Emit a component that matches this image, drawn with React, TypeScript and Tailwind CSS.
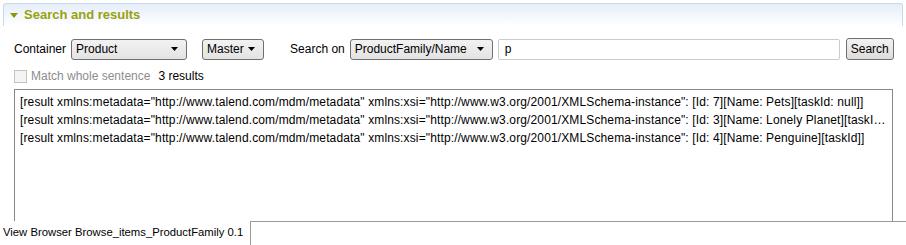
import { useState } from "react";

const rows = [
  '[result xmlns:metadata="http://www.talend.com/mdm/metadata" xmlns:xsi="http://www.w3.org/2001/XMLSchema-instance": [Id: 7][Name: Pets][taskId: null]]',
  '[result xmlns:metadata="http://www.talend.com/mdm/metadata" xmlns:xsi="http://www.w3.org/2001/XMLSchema-instance": [Id: 3][Name: Lonely Planet][taskId: null]]',
  '[result xmlns:metadata="http://www.talend.com/mdm/metadata" xmlns:xsi="http://www.w3.org/2001/XMLSchema-instance": [Id: 4][Name: Penguine][taskId]]',
];

function Combo({ label, width }: { label: string; width: string }) {
  return (
    <div
      className={`flex items-center justify-between h-[21px] ${width} border border-[#707070] rounded-[3px] bg-gradient-to-b from-[#f2f2f2] to-[#e3e3e3] pl-[4px] pr-[8px]`}
    >
      <span>{label}</span>
      <svg width="7" height="4" viewBox="0 0 7 4">
        <path d="M0 0h7L3.5 4z" fill="#000" />
      </svg>
    </div>
  );
}

export default function App() {
  const [query, setQuery] = useState("p");

  return (
    <div className="w-[906px] h-[245px] bg-white text-[12px] text-black font-['Liberation_Sans',sans-serif] overflow-hidden flex flex-col">
      <div className="mx-[3px] mt-[3px] h-[23px] rounded-t-[3px] border border-b-0 border-[#c5daf2] bg-gradient-to-b from-[#e6eefa] to-white flex items-center pl-[6px] gap-[6px]">
        <svg width="8" height="5" viewBox="0 0 8 5">
          <path d="M0 0h8L4 5z" fill="#8a9a0a" />
        </svg>
        <span className="text-[#98a20c] font-bold text-[13px]">Search and results</span>
      </div>

      <div className="flex items-center mt-[12px] pl-[14px] h-[22px]">
        <span className="mr-[5px]">Container</span>
        <Combo label="Product" width="w-[116px]" />
        <div className="w-[15px]" />
        <Combo label="Master" width="w-[62px]" />
        <span className="ml-[26px] mr-[5px]">Search on</span>
        <Combo label="ProductFamily/Name" width="w-[143px]" />
        <input
          value={query}
          onChange={(e) => setQuery(e.target.value)}
          className="ml-[5px] w-[342px] h-[21px] border border-[#c8ccd2] rounded-[2px] px-[6px] outline-none"
        />
        <button className="ml-[6px] h-[22px] px-[4px] border border-[#707070] rounded-[3px] bg-gradient-to-b from-[#f2f2f2] to-[#dcdcdc]">
          Search
        </button>
      </div>

      <div className="flex items-center pl-[14px] mt-[6px] h-[20px]">
        <span className="w-[13px] h-[13px] border border-[#c3c3c3] bg-[#f4f4f4] mr-[4px]" />
        <span className="text-[#8d8d8d]">Match whole sentence</span>
        <span className="ml-[8px]">3 results</span>
      </div>

      <div className="ml-[14px] w-[879px] mt-[3px] h-[132px] border border-[#828790] border-b-0 pt-[3px] pl-[5px] pr-[2px] tracking-[0.13px]">
        {rows.map((r) => (
          <div key={r} className="h-[18px] leading-[18px] whitespace-nowrap overflow-hidden text-ellipsis">
            {r}
          </div>
        ))}
      </div>

      <div className="flex h-[24px]">
        <div className="w-[251px] border-r border-[#9a9a9a] pl-[3px] leading-[22px] bg-white whitespace-nowrap text-[11.3px]">
          View Browser Browse_items_ProductFamily 0.1
        </div>
        <div className="flex-1 border-t border-[#9a9a9a]" />
      </div>
    </div>
  );
}
